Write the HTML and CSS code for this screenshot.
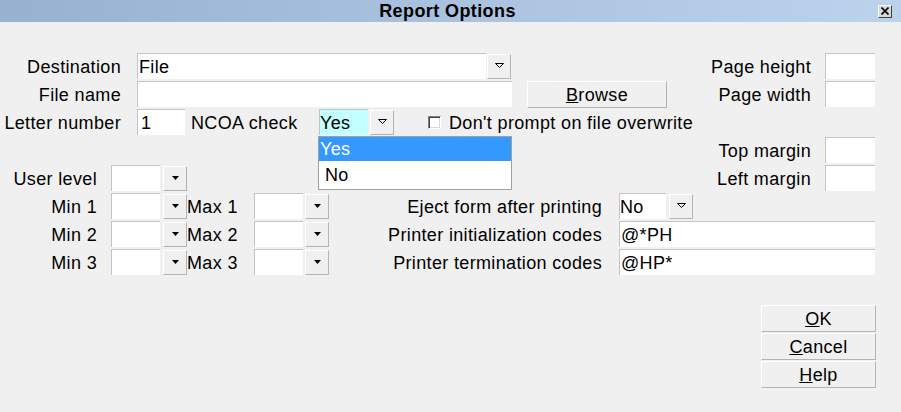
FILE: index.html
```html
<!DOCTYPE html>
<html lang="en">
<head>
    <meta charset="UTF-8">
    <title>Report Options</title>
    <link rel="stylesheet" href="styles.css">
</head>
<body>
    <div class="dialog">
        <div class="titlebar">
            <span class="title">Report Options</span>
            <span class="close">
                <svg width="8" height="8" viewBox="0 0 8 8"><path d="M0.5 0.5 L7.5 7.5 M7.5 0.5 L0.5 7.5" stroke="#000" stroke-width="1.6"/></svg>
            </span>
        </div>

        <div class="form">
            <!-- destination -->
            <div class="row">
                <span class="lbl lbl-a">Destination</span>
                <div class="field dest">File</div>
                <span class="drop gap1"><svg width="9" height="6" viewBox="0 0 9 6"><path d="M0.5 0.5 L8.5 0.5 L4.5 4.5 Z" fill="none" stroke="#000"/></svg></span>
                <div class="right">
                    <span class="lbl">Page height</span>
                    <div class="field num"></div>
                </div>
            </div>
            <!-- file name -->
            <div class="row">
                <span class="lbl lbl-a">File name</span>
                <div class="field fname"></div>
                <span class="btn browse"><u>B</u>rowse</span>
                <div class="right">
                    <span class="lbl">Page width</span>
                    <div class="field num"></div>
                </div>
            </div>
            <!-- letter number -->
            <div class="row">
                <span class="lbl lbl-a">Letter number</span>
                <div class="field letter">1</div>
                <span class="ncoa">NCOA check</span>
                <div class="field combo cyan">Yes</div>
                <span class="drop gap2"><svg width="9" height="6" viewBox="0 0 9 6"><path d="M0.5 0.5 L8.5 0.5 L4.5 4.5 Z" fill="none" stroke="#000"/></svg></span>
                <span class="check"></span>
                <span class="check-text">Don't prompt on file overwrite</span>

                <div class="list">
                    <div class="item sel">Yes</div>
                    <div class="item last">No</div>
                </div>
            </div>
            <!-- top margin -->
            <div class="row">
                <div class="right">
                    <span class="lbl">Top margin</span>
                    <div class="field num"></div>
                </div>
            </div>
            <!-- user level -->
            <div class="row">
                <span class="lbl lbl-b">User level</span>
                <div class="field small"></div>
                <span class="drop gap3"><svg width="7" height="4" viewBox="0 0 7 4"><path d="M0 0 L7 0 L3.5 4 Z" fill="#000"/></svg></span>
                <div class="right">
                    <span class="lbl">Left margin</span>
                    <div class="field num"></div>
                </div>
            </div>
            <!-- min / max 1 -->
            <div class="row">
                <span class="lbl lbl-b">Min 1</span>
                <div class="field small"></div>
                <span class="drop gap3"><svg width="7" height="4" viewBox="0 0 7 4"><path d="M0 0 L7 0 L3.5 4 Z" fill="#000"/></svg></span>
                <span class="maxlbl">Max 1</span>
                <div class="field small"></div>
                <span class="drop gap2"><svg width="7" height="4" viewBox="0 0 7 4"><path d="M0 0 L7 0 L3.5 4 Z" fill="#000"/></svg></span>
                <span class="lbl lbl-c">Eject form after printing</span>
                <div class="field combo2">No</div>
                <span class="drop gap3"><svg width="9" height="6" viewBox="0 0 9 6"><path d="M0.5 0.5 L8.5 0.5 L4.5 4.5 Z" fill="none" stroke="#000"/></svg></span>
            </div>
            <!-- min / max 2 -->
            <div class="row">
                <span class="lbl lbl-b">Min 2</span>
                <div class="field small"></div>
                <span class="drop gap3"><svg width="7" height="4" viewBox="0 0 7 4"><path d="M0 0 L7 0 L3.5 4 Z" fill="#000"/></svg></span>
                <span class="maxlbl">Max 2</span>
                <div class="field small"></div>
                <span class="drop gap2"><svg width="7" height="4" viewBox="0 0 7 4"><path d="M0 0 L7 0 L3.5 4 Z" fill="#000"/></svg></span>
                <span class="lbl lbl-c">Printer initialization codes</span>
                <div class="field codes">@*PH</div>
            </div>
            <!-- min / max 3 -->
            <div class="row">
                <span class="lbl lbl-b">Min 3</span>
                <div class="field small"></div>
                <span class="drop gap3"><svg width="7" height="4" viewBox="0 0 7 4"><path d="M0 0 L7 0 L3.5 4 Z" fill="#000"/></svg></span>
                <span class="maxlbl">Max 3</span>
                <div class="field small"></div>
                <span class="drop gap2"><svg width="7" height="4" viewBox="0 0 7 4"><path d="M0 0 L7 0 L3.5 4 Z" fill="#000"/></svg></span>
                <span class="lbl lbl-c">Printer termination codes</span>
                <div class="field codes">@HP*</div>
            </div>
        </div>

        <div class="buttons">
            <span class="btn action"><u>O</u>K</span>
            <span class="btn action"><u>C</u>ancel</span>
            <span class="btn action"><u>H</u>elp</span>
        </div>
    </div>
</body>
</html>
```

FILE: styles.css
```css
*{
    padding: 0;
    margin: 0;
    box-sizing: border-box;
}
body{
    background: #f0f0f0;
    font-family: "Liberation Sans", Arial, sans-serif;
    font-size: 18px;
    letter-spacing: 0.35px;
    color: #000;
}
.dialog{
    width: 901px;
    height: 412px;
    display: flex;
    flex-direction: column;
}
.titlebar{
    height: 22px;
    background: linear-gradient(to right, #97b1cf, #bcd3ee);
    display: grid;
    grid-template-columns: 1fr auto 1fr;
    align-items: center;
}
.title{
    grid-column: 2;
    font-weight: bold;
    font-size: 18px;
    letter-spacing: 0.4px;
    line-height: 22px;
    margin-left: -6px;
}
.close{
    grid-column: 3;
    justify-self: end;
    margin-right: 9px;
    width: 14px;
    height: 13px;
    background: #d8d8d8;
    border-top: 1px solid #fff;
    border-left: 1px solid #fff;
    border-right: 1px solid #404040;
    border-bottom: 1px solid #404040;
    display: flex;
    align-items: center;
    justify-content: center;
}
.close svg{
    display: block;
}
.form{
    margin-top: 30px;
    position: relative;
}
.row{
    height: 28px;
    display: flex;
    align-items: center;
    padding-right: 26px;
    position: relative;
}
.lbl{
    text-align: right;
    white-space: nowrap;
    flex: none;
    padding-top: 2px;
}
.lbl-a{
    width: 121px;
    margin-right: 16px;
}
.lbl-b{
    width: 97px;
    margin-right: 14px;
}
.lbl-c{
    width: 273px;
    margin-right: 17px;
}
.right{
    margin-left: auto;
    display: flex;
    align-items: center;
}
.right .lbl{
    margin-right: 14px;
}
.field{
    height: 26px;
    line-height: 26px;
    background: #fff;
    border-top: 1px solid #c4c4c4;
    border-left: 1px solid #c4c4c4;
    padding-left: 1px;
    white-space: nowrap;
    flex: none;
}
.dest{ width: 349px; }
.fname{ width: 375px; }
.letter{ width: 48px; padding-left: 3px; }
.num{ width: 50px; }
.small{ width: 49px; }
.codes{ width: 256px; }
.combo{ width: 49px; padding-left: 0; }
.combo2{ width: 47px; padding-left: 0; }
.cyan{
    background: #c4ffff;
}
.drop{
    width: 24px;
    height: 25px;
    background: #f0f0f0;
    border-top: 1px solid #fff;
    border-left: 1px solid #fff;
    border-right: 1px solid #b4b4b4;
    border-bottom: 1px solid #b4b4b4;
    display: flex;
    align-items: center;
    justify-content: center;
    flex: none;
}
.drop svg{
    display: block;
}
.gap1{ margin-left: 1px; }
.gap2{ margin-left: 2px; }
.gap3{ margin-left: 3px; }
.btn{
    background: #f0f0f0;
    border-top: 1px solid #fff;
    border-left: 1px solid #fff;
    border-right: 1px solid #b4b4b4;
    border-bottom: 1px solid #b4b4b4;
    text-align: center;
    flex: none;
}
.browse{
    width: 140px;
    height: 27px;
    line-height: 26px;
    margin-left: 15px;
}
.ncoa{
    width: 134px;
    padding-left: 6px;
    padding-top: 2px;
    white-space: nowrap;
    flex: none;
}
.maxlbl{
    width: 67px;
    padding-left: 0;
    padding-top: 2px;
    white-space: nowrap;
    flex: none;
}
.check{
    width: 13px;
    height: 13px;
    margin-left: 34px;
    background: #fff;
    border-top: 1px solid #808080;
    border-left: 1px solid #808080;
    border-right: 1px solid #fff;
    border-bottom: 1px solid #fff;
    box-shadow: inset 1px 1px 0 #404040, inset -1px -1px 0 #d8d8d8;
    flex: none;
}
.check-text{
    margin-left: 8px;
    padding-top: 2px;
    white-space: nowrap;
}
.list{
    position: absolute;
    left: 318px;
    top: 28px;
    width: 194px;
    background: #fff;
    border: 1px solid #a0a0a0;
    z-index: 2;
}
.item{
    height: 24px;
    line-height: 25px;
    padding-left: 1px;
}
.item.sel{
    background: #3399ff;
    color: #fff;
}
.item.last{
    height: 28px;
    line-height: 29px;
    padding-left: 6px;
}
.buttons{
    margin-top: 29px;
    margin-right: 25px;
    align-self: flex-end;
    display: flex;
    flex-direction: column;
    gap: 1px;
}
.action{
    width: 115px;
    height: 27px;
    line-height: 26px;
}
```
